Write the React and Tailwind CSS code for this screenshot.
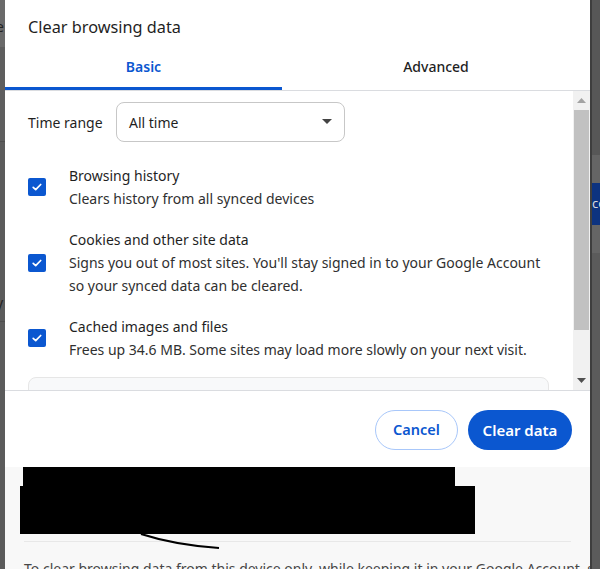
import { useState } from 'react';

const items = [
  {
    title: 'Browsing history',
    lines: ['Clears history from all synced devices'],
  },
  {
    title: 'Cookies and other site data',
    lines: [
      "Signs you out of most sites. You'll stay signed in to your Google Account",
      'so your synced data can be cleared.',
    ],
  },
  {
    title: 'Cached images and files',
    lines: ['Frees up 34.6 MB. Some sites may load more slowly on your next visit.'],
  },
];

const Check = () => (
  <span className="flex h-[18px] w-[18px] shrink-0 items-center justify-center rounded-[2px] bg-[#0b57d0]">
    <svg width="12" height="12" viewBox="0 0 12 12" fill="none">
      <path d="M2.2 6.3l2.5 2.4 5-5.2" stroke="#fff" strokeWidth="1.7" strokeLinecap="round" strokeLinejoin="round" />
    </svg>
  </span>
);

const App = () => {
  const [tab, setTab] = useState('basic');

  return (
    <div className="flex h-[569px] w-[600px] overflow-hidden bg-[#5b5b5b] font-['Segoe_UI','Noto_Sans',sans-serif] text-[#1f1f1f]">
      {/* page behind, left */}
      <div className="flex w-[5px] shrink-0 flex-col overflow-hidden text-[14px] text-[#222]">
        <div className="h-[47px] shrink-0 bg-[#6a6a6a] pt-[16px] -ml-[4px]">e</div>
        <div className="h-[95px] shrink-0 border-b border-[#4e4e4e] bg-[#5e5e5e]" />
        <div className="h-[180px] shrink-0 border-b border-[#4e4e4e] bg-[#5b5b5b] pt-[150px] -ml-[4px]">y</div>
        <div className="flex-1 bg-[#5b5b5b]" />
      </div>

      {/* DIALOG */}
      <div className="flex w-[585px] shrink-0 flex-col bg-white">
        <h1 className="h-[48px] shrink-0 pl-[23px] pt-[15px] text-[16.3px] leading-[24px] text-[#1f1f1f]">Clear browsing data</h1>

        {/* TABS */}
        <div className="flex h-[43px] shrink-0 border-b border-[#dadce0]">
          <button
            onClick={() => setTab('basic')}
            className={`flex w-[277px] flex-col items-center justify-between pt-[8px] text-[14px] font-semibold ${tab === 'basic' ? 'text-[#0b57d0]' : 'text-[#1f1f1f]'}`}
          >
            Basic
            <span className={`h-[3px] w-full ${tab === 'basic' ? 'bg-[#0b57d0]' : 'bg-transparent'}`} />
          </button>
          <button
            onClick={() => setTab('advanced')}
            className={`flex flex-1 flex-col items-center justify-between pt-[8px] text-[14px] font-medium ${tab === 'advanced' ? 'text-[#0b57d0]' : 'text-[#1f1f1f]'}`}
          >
            Advanced
            <span className={`h-[3px] w-full ${tab === 'advanced' ? 'bg-[#0b57d0]' : 'bg-transparent'}`} />
          </button>
        </div>

        {/* SCROLL AREA */}
        <div className="flex h-[300px] shrink-0 border-b border-[#dadce0]">
          <div className="flex-1 overflow-hidden pl-[23px]">
            <div className="mt-[11px] flex items-center">
              <span className="w-[88px] text-[14px]">Time range</span>
              <div className="flex h-[40px] w-[229px] items-center justify-between rounded-[8px] border border-[#c7c7c7] pl-[12px] pr-[12px] text-[14px]">
                All time
                <svg width="10" height="6" viewBox="0 0 10 6">
                  <path d="M0 0h10L5 5z" fill="#444" />
                </svg>
              </div>
            </div>

            <div className="mt-[22px] flex flex-col gap-[18px]">
              {items.map((it) => (
                <div key={it.title} className="flex items-center text-[14px] leading-[23px]">
                  <Check />
                  <div className="ml-[23px]">
                    <div>{it.title}</div>
                    {it.lines.map((l) => (
                      <div key={l} className="whitespace-nowrap text-[#303030]">{l}</div>
                    ))}
                  </div>
                </div>
              ))}
            </div>

            <div className="mt-[16px] mr-[24px] h-[40px] rounded-t-[8px] border border-[#e6e6e6] bg-[#f8f9fa]" />
          </div>

          {/* scrollbar */}
          <div className="flex w-[17px] flex-col bg-[#f1f1f1]">
            <div className="flex h-[19px] items-center justify-center">
              <svg width="9" height="5" viewBox="0 0 9 5"><path d="M0 5h9L4.5 0z" fill="#a3a3a3" /></svg>
            </div>
            <div className="mx-[1px] h-[220px] bg-[#c1c1c1]" />
            <div className="flex-1" />
            <div className="flex h-[19px] items-center justify-center">
              <svg width="9" height="5" viewBox="0 0 9 5"><path d="M0 0h9L4.5 5z" fill="#505050" /></svg>
            </div>
          </div>
        </div>

        {/* BUTTONS */}
        <div className="flex h-[76px] shrink-0 items-start justify-end gap-[10px] pr-[18px] pt-[19px]">
          <button className="h-[40px] w-[83px] rounded-full border border-[#a8c7fa] text-[14.5px] font-semibold text-[#0b57d0]">Cancel</button>
          <button className="h-[40px] w-[104px] rounded-full bg-[#0b57d0] text-[15px] font-semibold text-white">Clear data</button>
        </div>

        {/* SYNC FOOTER (redacted) */}
        <div className="relative min-h-0 flex-1 overflow-hidden bg-[#f8f8f8]">
          <div className="ml-[18px] h-[20px] w-[432px] bg-black" />
          <div className="ml-[15px] -mt-[1px] h-[48px] w-[455px] bg-black" />
          <div className="mx-[19px] mt-[7px] h-px bg-[#e8e8e8]" />
          <p className="mt-[16px] ml-[19px] whitespace-nowrap text-[14px] text-[#474747]">
            To clear browsing data from this device only, while keeping it in your Google Account, sign out.
          </p>
          <svg className="absolute left-0 top-0" width="585" height="100" viewBox="0 0 585 100">
            <path d="M136 67 Q 170 78 214 81" stroke="#000" strokeWidth="2.2" fill="none" />
          </svg>
        </div>
      </div>

      {/* page behind, right */}
      <div className="flex flex-1 flex-col border-l-2 border-[#3e3e3e]">
        <div className="h-[155px] shrink-0 bg-[#575757]" />
        <div className="flex h-[98px] shrink-0 flex-col justify-center bg-[#656565]">
          <div className="flex h-[42px] items-center overflow-hidden whitespace-nowrap bg-[#0d3380] text-[13px] text-[#d8d8d8]">co</div>
        </div>
        <div className="flex-1 bg-[#5b5b5b]" />
      </div>
    </div>
  );
};

export default App;
